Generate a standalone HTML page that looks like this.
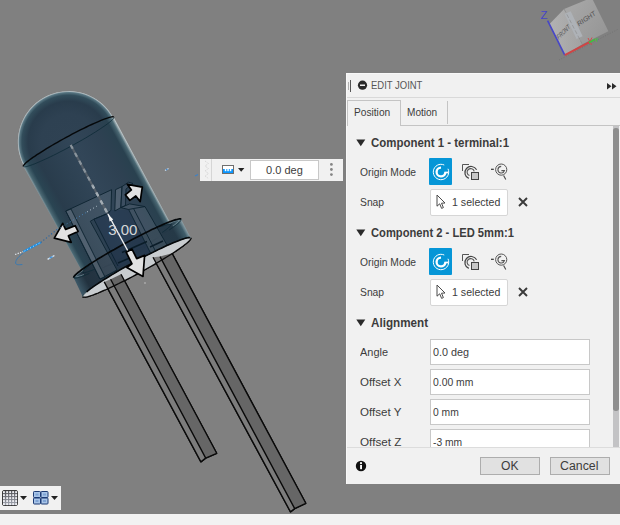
<!DOCTYPE html>
<html><head><meta charset="utf-8"><title>Edit Joint</title>
<style>
html,body{margin:0;padding:0;}
body{width:620px;height:525px;overflow:hidden;position:relative;background:#808080;font-family:"Liberation Sans",sans-serif;font-size:11px;color:#3c3c3c;}
.abs{position:absolute;}
#scene{position:absolute;left:0;top:0;}
#strip{position:absolute;left:0;top:514px;width:620px;height:11px;background:#f2f2f2;}
#tb{position:absolute;left:0;top:486px;width:61px;height:24px;background:#f1f1f1;}
#flt{position:absolute;left:200px;top:159px;width:143px;height:22px;background:#f1f1f1;}
#panel{position:absolute;left:346px;top:73px;width:274px;height:411px;background:#f1f1f1;box-sizing:border-box;}
.t{position:absolute;white-space:nowrap;line-height:14px;transform-origin:0 50%;}
.b{font-weight:bold;font-size:12px;}
.inp{position:absolute;background:#fff;border:1px solid #c8c8c8;box-sizing:border-box;}
.btn{position:absolute;background:#e1e1e1;border:1px solid #adadad;box-sizing:border-box;}
</style></head><body>
<svg id="scene" width="620" height="525" viewBox="0 0 620 525">
<defs>
<linearGradient id="gb" gradientUnits="userSpaceOnUse" x1="43.4" y1="204.4" x2="133.8" y2="155.2">
<stop offset="0" stop-color="#9fb0b6"/><stop offset="0.025" stop-color="#4a6873"/><stop offset="0.07" stop-color="#2a4553"/><stop offset="0.16" stop-color="#293c4c"/><stop offset="0.34" stop-color="#2d4152"/><stop offset="0.55" stop-color="#324658"/><stop offset="0.8" stop-color="#2e4152"/><stop offset="0.93" stop-color="#29414f"/><stop offset="0.975" stop-color="#4b6974"/><stop offset="1" stop-color="#b9c4c7"/></linearGradient>
<radialGradient id="gd" gradientUnits="userSpaceOnUse" cx="68.6" cy="141.8" r="50.7">
<stop offset="0" stop-color="#2f4253"/><stop offset="0.55" stop-color="#2e4152"/><stop offset="0.8" stop-color="#293c4c"/><stop offset="0.92" stop-color="#324d5b"/><stop offset="0.972" stop-color="#597783"/><stop offset="1" stop-color="#c9d2d5"/></radialGradient>
<linearGradient id="gf" gradientUnits="userSpaceOnUse" x1="73.7" y1="277.7" x2="181.1" y2="219.3">
<stop offset="0" stop-color="#3c5766"/><stop offset="0.08" stop-color="#22323f"/><stop offset="0.5" stop-color="#2a3c4c"/><stop offset="0.9" stop-color="#253947"/><stop offset="0.97" stop-color="#3f5d6a"/><stop offset="1" stop-color="#8fa3aa"/></linearGradient>
</defs>
<path d="M73.7,277.7 L73.7,277.3 L73.8,276.8 L74.2,276.2 L74.9,275.4 L75.7,274.6 L76.8,273.6 L78.1,272.5 L79.6,271.3 L81.3,270.0 L83.2,268.7 L85.3,267.2 L87.6,265.7 L90.0,264.0 L92.6,262.4 L95.4,260.6 L98.2,258.8 L101.3,257.0 L104.4,255.1 L107.6,253.2 L110.9,251.3 L114.3,249.4 L117.7,247.4 L121.2,245.5 L124.7,243.6 L128.2,241.7 L131.8,239.8 L135.2,238.0 L138.7,236.2 L142.1,234.5 L145.5,232.8 L148.7,231.2 L151.9,229.6 L155.0,228.2 L158.0,226.8 L160.8,225.6 L163.5,224.4 L166.0,223.3 L168.4,222.3 L170.5,221.5 L172.5,220.8 L174.4,220.1 L176.0,219.6 L177.4,219.3 L178.6,219.0 L179.5,218.9 L180.3,218.9 L180.8,219.1 L181.1,219.3 L190.8,238.0 L190.5,237.7 L190.0,237.6 L189.2,237.6 L188.2,237.7 L187.0,237.9 L185.6,238.2 L184.0,238.7 L182.2,239.3 L180.1,240.0 L177.9,240.9 L175.5,241.8 L173.0,242.9 L170.3,244.1 L167.4,245.3 L164.4,246.7 L161.3,248.1 L158.1,249.7 L154.8,251.3 L151.5,253.0 L148.0,254.7 L144.5,256.5 L141.0,258.3 L137.5,260.2 L133.9,262.1 L130.4,264.1 L126.9,266.0 L123.4,268.0 L120.0,269.9 L116.7,271.9 L113.5,273.8 L110.3,275.7 L107.3,277.5 L104.4,279.3 L101.6,281.1 L99.0,282.8 L96.6,284.4 L94.3,286.0 L92.2,287.5 L90.3,288.9 L88.6,290.2 L87.1,291.4 L85.8,292.5 L84.7,293.5 L83.9,294.4 L83.3,295.2 L82.9,295.8 L82.7,296.4 L82.8,296.8 Z" fill="url(#gf)"/>
<path d="M190.8,238.0 L190.9,238.4 L190.7,239.0 L190.3,239.6 L189.7,240.4 L188.9,241.3 L187.8,242.3 L186.5,243.4 L185.0,244.6 L183.3,245.9 L181.4,247.3 L179.3,248.8 L177.0,250.4 L174.6,252.0 L172.0,253.7 L169.2,255.5 L166.3,257.3 L163.3,259.1 L160.1,261.0 L156.9,262.9 L153.6,264.9 L150.2,266.8 L146.7,268.8 L143.2,270.7 L139.7,272.7 L136.1,274.6 L132.6,276.5 L129.1,278.3 L125.6,280.1 L122.1,281.8 L118.8,283.5 L115.5,285.1 L112.3,286.7 L109.2,288.1 L106.2,289.5 L103.3,290.7 L100.6,291.9 L98.1,293.0 L95.7,293.9 L93.5,294.8 L91.4,295.5 L89.6,296.1 L88.0,296.6 L86.6,296.9 L85.4,297.1 L84.4,297.2 L83.6,297.2 L83.1,297.1 L82.8,296.8 L82.7,296.4 L82.9,295.8 L83.3,295.2 L83.9,294.4 L84.7,293.5 L85.8,292.5 L87.1,291.4 L88.6,290.2 L90.3,288.9 L92.2,287.5 L94.3,286.0 L96.6,284.4 L99.0,282.8 L101.6,281.1 L104.4,279.3 L107.3,277.5 L110.3,275.7 L113.5,273.8 L116.7,271.9 L120.0,269.9 L123.4,268.0 L126.9,266.0 L130.4,264.1 L133.9,262.1 L137.5,260.2 L141.0,258.3 L144.5,256.5 L148.0,254.7 L151.5,253.0 L154.8,251.3 L158.1,249.7 L161.3,248.1 L164.4,246.7 L167.4,245.3 L170.3,244.1 L173.0,242.9 L175.5,241.8 L177.9,240.9 L180.1,240.0 L182.2,239.3 L184.0,238.7 L185.6,238.2 L187.0,237.9 L188.2,237.7 L189.2,237.6 L190.0,237.6 L190.5,237.7 L190.8,238.0 Z" fill="#c9cdd0"/>
<polygon points="104.2,281.9 110.6,279.2 205.7,458.1 200.9,461.9" fill="#7c7c7c"/>
<polygon points="110.6,279.2 121.0,274.2 216.7,453.3 205.7,458.1" fill="#666666"/>
<path d="M104.2,281.9 L200.9,461.9 L205.7,458.1 L216.7,453.3 L121.0,274.2 M110.6,279.2 L205.7,458.1" fill="none" stroke="#0a0a0a" stroke-width="1.35" stroke-linejoin="round"/>
<polygon points="153.0,257.2 160.0,256.6 294.7,508.6 290.5,511.9" fill="#7c7c7c"/>
<polygon points="160.0,256.6 172.0,253.2 305.8,503.3 294.7,508.6" fill="#666666"/>
<path d="M153.0,257.2 L290.5,511.9 L294.7,508.6 L305.8,503.3 L172.0,253.2 M160.0,256.6 L294.7,508.6" fill="none" stroke="#0a0a0a" stroke-width="1.35" stroke-linejoin="round"/>
<path d="M190.8,238.0 L190.9,238.4 L190.7,239.0 L190.3,239.6 L189.7,240.4 L188.9,241.3 L187.8,242.3 L186.5,243.4 L185.0,244.6 L183.3,245.9 L181.4,247.3 L179.3,248.8 L177.0,250.4 L174.6,252.0 L172.0,253.7 L169.2,255.5 L166.3,257.3 L163.3,259.1 L160.1,261.0 L156.9,262.9 L153.6,264.9 L150.2,266.8 L146.7,268.8 L143.2,270.7 L139.7,272.7 L136.1,274.6 L132.6,276.5 L129.1,278.3 L125.6,280.1 L122.1,281.8 L118.8,283.5 L115.5,285.1 L112.3,286.7 L109.2,288.1 L106.2,289.5 L103.3,290.7 L100.6,291.9 L98.1,293.0 L95.7,293.9 L93.5,294.8 L91.4,295.5 L89.6,296.1 L88.0,296.6 L86.6,296.9 L85.4,297.1 L84.4,297.2 L83.6,297.2 L83.1,297.1 L82.8,296.8" fill="none" stroke="#0a0a0a" stroke-width="1.2"/>
<path d="M23.4,166.4 L23.3,166.0 L23.5,165.6 L23.8,165.1 L24.3,164.4 L25.0,163.7 L25.9,162.8 L27.0,161.9 L28.3,160.9 L29.7,159.8 L31.3,158.6 L33.0,157.4 L35.0,156.1 L37.0,154.7 L39.2,153.3 L41.5,151.8 L43.9,150.3 L46.5,148.7 L49.1,147.1 L51.8,145.5 L54.6,143.9 L57.4,142.3 L60.3,140.7 L63.3,139.0 L66.2,137.4 L69.2,135.8 L72.1,134.2 L75.1,132.7 L78.0,131.2 L80.9,129.7 L83.7,128.3 L86.4,127.0 L89.1,125.7 L91.7,124.5 L94.2,123.4 L96.6,122.3 L98.9,121.3 L101.0,120.4 L103.0,119.6 L104.9,118.9 L106.5,118.3 L108.1,117.8 L109.4,117.4 L110.6,117.1 L111.6,116.9 L112.5,116.8 L113.1,116.9 L113.5,117.0 L113.8,117.2 L171.2,224.7 L170.8,224.1 L170.3,224.0 L169.7,224.0 L168.9,224.1 L167.9,224.3 L166.8,224.6 L165.5,225.0 L164.0,225.5 L162.3,226.1 L160.5,226.8 L158.6,227.6 L156.5,228.5 L154.3,229.5 L152.0,230.5 L149.5,231.6 L147.0,232.8 L144.4,234.1 L141.7,235.4 L138.9,236.8 L136.1,238.2 L133.3,239.7 L130.4,241.2 L127.5,242.7 L124.6,244.3 L121.7,245.9 L118.8,247.5 L116.0,249.1 L113.2,250.7 L110.5,252.2 L107.9,253.8 L105.3,255.3 L102.8,256.9 L100.4,258.3 L98.1,259.8 L96.0,261.2 L94.0,262.5 L92.1,263.7 L90.4,265.0 L88.8,266.1 L87.4,267.1 L86.2,268.1 L85.1,269.0 L84.2,269.8 L83.5,270.5 L83.0,271.1 L82.7,271.6 L82.6,272.1 L82.6,272.4 Z" fill="url(#gb)"/>
<path d="M23.4,166.4 L23.6,165.2 L22.2,162.3 L21.0,159.2 L20.0,156.1 L19.1,152.9 L18.5,149.7 L18.1,146.5 L17.9,143.2 L17.9,139.9 L18.2,136.6 L18.6,133.4 L19.3,130.2 L20.1,127.0 L21.2,123.9 L22.4,120.9 L23.9,117.9 L25.5,115.1 L27.3,112.4 L29.3,109.7 L31.5,107.3 L33.8,104.9 L36.2,102.8 L38.8,100.8 L41.5,98.9 L44.4,97.3 L47.3,95.8 L50.3,94.5 L53.4,93.4 L56.6,92.5 L59.8,91.9 L63.0,91.4 L66.3,91.2 L69.6,91.1 L72.9,91.3 L76.1,91.7 L79.4,92.3 L82.5,93.1 L85.7,94.1 L88.7,95.3 L91.7,96.7 L94.6,98.2 L97.3,100.0 L100.0,102.0 L102.5,104.1 L104.8,106.3 L107.1,108.8 L109.1,111.3 L111.0,114.0 L112.7,116.8 L113.8,117.2 L113.5,117.0 L113.1,116.9 L112.5,116.8 L111.6,116.9 L110.6,117.1 L109.4,117.4 L108.1,117.8 L106.5,118.3 L104.9,118.9 L103.0,119.6 L101.0,120.4 L98.9,121.3 L96.6,122.3 L94.2,123.4 L91.7,124.5 L89.1,125.7 L86.4,127.0 L83.7,128.3 L80.9,129.7 L78.0,131.2 L75.1,132.7 L72.1,134.2 L69.2,135.8 L66.2,137.4 L63.3,139.0 L60.3,140.7 L57.4,142.3 L54.6,143.9 L51.8,145.5 L49.1,147.1 L46.5,148.7 L43.9,150.3 L41.5,151.8 L39.2,153.3 L37.0,154.7 L35.0,156.1 L33.0,157.4 L31.3,158.6 L29.7,159.8 L28.3,160.9 L27.0,161.9 L25.9,162.8 L25.0,163.7 L24.3,164.4 L23.8,165.1 L23.5,165.6 L23.3,166.0 L23.4,166.4 Z" fill="url(#gd)"/>
<path d="M113.8,117.2 L113.9,117.6 L113.7,118.0 L113.4,118.5 L112.9,119.2 L112.2,119.9 L111.3,120.8 L110.2,121.7 L108.9,122.7 L107.5,123.8 L105.9,125.0 L104.2,126.2 L102.2,127.5 L100.2,128.9 L98.0,130.3 L95.7,131.8 L93.3,133.3 L90.7,134.9 L88.1,136.5 L85.4,138.1 L82.6,139.7 L79.8,141.3 L76.9,142.9 L73.9,144.6 L71.0,146.2 L68.0,147.8 L65.1,149.4 L62.1,150.9 L59.2,152.4 L56.3,153.9 L53.5,155.3 L50.8,156.6 L48.1,157.9 L45.5,159.1 L43.0,160.2 L40.6,161.3 L38.3,162.3 L36.2,163.2 L34.2,164.0 L32.3,164.7 L30.7,165.3 L29.1,165.8 L27.8,166.2 L26.6,166.5 L25.6,166.7 L24.7,166.8 L24.1,166.7 L23.7,166.6 L23.4,166.4" fill="none" stroke="#0d2a36" stroke-width="0.8"/>
<path d="M23.4,166.4 L23.3,166.0 L23.5,165.6 L23.8,165.1 L24.3,164.4 L25.0,163.7 L25.9,162.8 L27.0,161.9 L28.3,160.9 L29.7,159.8 L31.3,158.6 L33.0,157.4 L35.0,156.1 L37.0,154.7 L39.2,153.3 L41.5,151.8 L43.9,150.3 L46.5,148.7 L49.1,147.1 L51.8,145.5 L54.6,143.9 L57.4,142.3 L60.3,140.7 L63.3,139.0 L66.2,137.4 L69.2,135.8 L72.1,134.2 L75.1,132.7 L78.0,131.2 L80.9,129.7 L83.7,128.3 L86.4,127.0 L89.1,125.7 L91.7,124.5 L94.2,123.4 L96.6,122.3 L98.9,121.3 L101.0,120.4 L103.0,119.6 L104.9,118.9 L106.5,118.3 L108.1,117.8 L109.4,117.4 L110.6,117.1 L111.6,116.9 L112.5,116.8 L113.1,116.9 L113.5,117.0 L113.8,117.2" fill="none" stroke="#05080a" stroke-width="1.4"/>
<polygon points="93.9,219.2 109.0,212.6 111.0,210.3 128.7,209.5 152.0,255.0 117.0,268.0" fill="rgba(34,54,80,0.5)" stroke="none" stroke-width="0.9" stroke-linejoin="round" />
<polygon points="65.8,211.0 111.6,189.7 111.0,210.3 107.7,213.5 93.9,219.2 90.3,221.3 117.0,270.0 100.0,279.0" fill="rgba(150,158,172,0.17)" stroke="#0c2230" stroke-width="0.9" stroke-linejoin="round" />
<polygon points="65.8,211.0 71.0,209.0 105.0,277.0 100.0,279.0" fill="rgba(170,178,190,0.20)" stroke="#0c2230" stroke-width="0.9" stroke-linejoin="round" />
<path d="M93.9,219.2 L118.0,266.0" fill="none" stroke="#0c2230" stroke-width="0.9" />
<path d="M93.9,219.2 L108.4,213.2 L109.5,211.0" fill="none" stroke="#0c2230" stroke-width="0.9" />
<polygon points="115.5,189.7 122.0,186.6 120.8,207.6 114.8,211.0" fill="rgba(150,158,172,0.30)" stroke="#0c2230" stroke-width="0.9" stroke-linejoin="round" />
<polygon points="122.0,186.6 128.5,182.2 133.0,183.5 126.0,189.0 125.5,205.5 120.8,207.6" fill="rgba(90,105,125,0.30)" stroke="#0c2230" stroke-width="0.9" stroke-linejoin="round" />
<polygon points="120.8,207.6 129.7,203.9 145.0,206.6 171.0,252.0 153.0,258.0 128.7,209.5" fill="rgba(150,158,172,0.17)" stroke="#0c2230" stroke-width="0.9" stroke-linejoin="round" />
<path d="M133.5,208.5 L158.0,256.0" fill="none" stroke="#0c2230" stroke-width="0.9" />
<path d="M128.7,209.5 L133.5,208.5 L145.0,206.6" fill="none" stroke="#0c2230" stroke-width="0.9" />
<path d="M122.0,252.5 L147.0,241.5" fill="none" stroke="#0a1c28" stroke-width="1.6" />
<path d="M118.0,263.0 L132.0,257.0" fill="none" stroke="#0a1c28" stroke-width="1.6" />
<path d="M150.0,247.0 L163.0,241.0" fill="none" stroke="#0a1c28" stroke-width="1.4" />
<path d="M181.1,219.3 L181.1,219.7 L181.0,220.2 L180.6,220.8 L179.9,221.6 L179.1,222.4 L178.0,223.4 L176.7,224.5 L175.2,225.7 L173.5,227.0 L171.6,228.3 L169.5,229.8 L167.2,231.3 L164.8,233.0 L162.2,234.6 L159.4,236.4 L156.6,238.2 L153.5,240.0 L150.4,241.9 L147.2,243.8 L143.9,245.7 L140.5,247.6 L137.1,249.6 L133.6,251.5 L130.1,253.4 L126.6,255.3 L123.0,257.2 L119.6,259.0 L116.1,260.8 L112.7,262.5 L109.3,264.2 L106.1,265.8 L102.9,267.4 L99.8,268.8 L96.8,270.2 L94.0,271.4 L91.3,272.6 L88.8,273.7 L86.4,274.7 L84.3,275.5 L82.3,276.2 L80.4,276.9 L78.8,277.4 L77.4,277.7 L76.2,278.0 L75.3,278.1 L74.5,278.1 L74.0,277.9 L73.7,277.7 L190.8,238.0 L190.5,237.7 L190.0,237.6 L189.2,237.6 L188.2,237.7 L187.0,237.9 L185.6,238.2 L184.0,238.7 L182.2,239.3 L180.1,240.0 L177.9,240.9 L175.5,241.8 L173.0,242.9 L170.3,244.1 L167.4,245.3 L164.4,246.7 L161.3,248.1 L158.1,249.7 L154.8,251.3 L151.5,253.0 L148.0,254.7 L144.5,256.5 L141.0,258.3 L137.5,260.2 L133.9,262.1 L130.4,264.1 L126.9,266.0 L123.4,268.0 L120.0,269.9 L116.7,271.9 L113.5,273.8 L110.3,275.7 L107.3,277.5 L104.4,279.3 L101.6,281.1 L99.0,282.8 L96.6,284.4 L94.3,286.0 L92.2,287.5 L90.3,288.9 L88.6,290.2 L87.1,291.4 L85.8,292.5 L84.7,293.5 L83.9,294.4 L83.3,295.2 L82.9,295.8 L82.7,296.4 L82.8,296.8 Z" fill="#22323f" opacity="0.12"/>
<path d="M83.8,274.5 L83.2,274.7 L82.6,275.0 L82.0,275.2 L81.5,275.4 L81.0,275.6 L80.5,275.7 L80.0,275.9 L79.6,276.0 L79.1,276.2 L78.8,276.3 L78.4,276.4 L78.0,276.5 L77.7,276.6 L77.4,276.6 L77.2,276.7 L76.9,276.7 L76.7,276.7 L76.5,276.7 L76.3,276.7 L76.2,276.7 L76.1,276.6 L76.0,276.6 L75.9,276.5 L75.9,276.4 L75.9,276.3 L75.9,276.2 L75.9,276.1 L76.0,276.0 L76.1,275.8 L76.2,275.6 L76.4,275.5 L76.5,275.3 L76.7,275.1 L77.0,274.8 L77.2,274.6 L77.5,274.3 L77.8,274.1 L78.1,273.8 L78.5,273.5 L78.9,273.2 L79.3,272.9 L79.7,272.6 L80.1,272.2 L80.6,271.9 L81.1,271.5 L81.6,271.2 L82.2,270.8 L82.7,270.4" fill="none" stroke="#6f8894" stroke-width="1.1" opacity="0.8"/>
<path d="M170.0,222.9 L170.7,222.6 L171.3,222.4 L171.9,222.2 L172.5,221.9 L173.0,221.7 L173.6,221.5 L174.1,221.4 L174.5,221.2 L175.0,221.0 L175.4,220.9 L175.8,220.8 L176.2,220.7 L176.6,220.6 L176.9,220.5 L177.2,220.4 L177.5,220.4 L177.8,220.3 L178.0,220.3 L178.2,220.3 L178.4,220.3 L178.5,220.3 L178.7,220.3 L178.8,220.4 L178.8,220.4 L178.9,220.5 L178.9,220.6 L178.9,220.7 L178.9,220.8 L178.8,221.0 L178.7,221.1 L178.6,221.3 L178.5,221.4 L178.4,221.6 L178.2,221.8 L178.0,222.0 L177.7,222.3 L177.5,222.5 L177.2,222.8 L176.9,223.0 L176.5,223.3 L176.2,223.6 L175.8,223.9 L175.4,224.2 L174.9,224.6 L174.5,224.9 L174.0,225.3 L173.5,225.6 L172.9,226.0" fill="none" stroke="#6f8894" stroke-width="1.1" opacity="0.8"/>
<path d="M73.7,277.7 L73.7,277.3 L73.8,276.8 L74.2,276.2 L74.9,275.4 L75.7,274.6 L76.8,273.6 L78.1,272.5 L79.6,271.3 L81.3,270.0 L83.2,268.7 L85.3,267.2 L87.6,265.7 L90.0,264.0 L92.6,262.4 L95.4,260.6 L98.2,258.8 L101.3,257.0 L104.4,255.1 L107.6,253.2 L110.9,251.3 L114.3,249.4 L117.7,247.4 L121.2,245.5 L124.7,243.6 L128.2,241.7 L131.8,239.8 L135.2,238.0 L138.7,236.2 L142.1,234.5 L145.5,232.8 L148.7,231.2 L151.9,229.6 L155.0,228.2 L158.0,226.8 L160.8,225.6 L163.5,224.4 L166.0,223.3 L168.4,222.3 L170.5,221.5 L172.5,220.8 L174.4,220.1 L176.0,219.6 L177.4,219.3 L178.6,219.0 L179.5,218.9 L180.3,218.9 L180.8,219.1 L181.1,219.3" fill="none" stroke="#05080a" stroke-width="1.7"/>
<path d="M181.1,219.3 L181.1,219.4 L181.1,219.5 L181.1,219.6 L181.1,219.7 L181.1,219.8 L181.1,219.9 L181.1,220.0 L181.0,220.1 L180.9,220.3 L180.9,220.4 L180.8,220.5 L180.7,220.7 L180.6,220.9 L180.4,221.0 L180.3,221.2 L180.1,221.4 L180.0,221.6 L179.8,221.7 L179.6,221.9 L179.4,222.1 L179.2,222.3 L179.0,222.6 L178.7,222.8 L178.5,223.0 L178.2,223.2 L177.9,223.5 L177.7,223.7 L177.4,224.0 L177.0,224.2 L176.7,224.5 L176.4,224.8 L176.0,225.0 L175.7,225.3 L175.3,225.6 L175.0,225.9 L174.6,226.2 L174.2,226.5 L173.8,226.8 L173.3,227.1 L172.9,227.4 L172.5,227.7 L172.0,228.1 L171.5,228.4 L171.1,228.7 L170.6,229.1 L170.1,229.4 L169.6,229.7 L169.1,230.1" fill="none" stroke="#0d2a36" stroke-width="0.9"/>
<path d="M89.3,273.5 L88.7,273.7 L88.2,274.0 L87.6,274.2 L87.1,274.4 L86.5,274.6 L86.0,274.8 L85.5,275.0 L85.0,275.2 L84.5,275.4 L84.0,275.6 L83.5,275.8 L83.0,276.0 L82.6,276.1 L82.1,276.3 L81.7,276.4 L81.3,276.6 L80.8,276.7 L80.4,276.9 L80.0,277.0 L79.7,277.1 L79.3,277.2 L78.9,277.3 L78.6,277.4 L78.2,277.5 L77.9,277.6 L77.6,277.7 L77.3,277.8 L77.0,277.8 L76.7,277.9 L76.5,277.9 L76.2,278.0 L76.0,278.0 L75.7,278.0 L75.5,278.1 L75.3,278.1 L75.1,278.1 L74.9,278.1 L74.8,278.1 L74.6,278.1 L74.4,278.1 L74.3,278.0 L74.2,278.0 L74.1,278.0 L74.0,277.9 L73.9,277.9 L73.8,277.8 L73.8,277.8 L73.7,277.7" fill="none" stroke="#0d2a36" stroke-width="0.9"/>
<path d="M94.4,269.4 L93.6,269.7 L92.8,270.0 L92.0,270.3 L91.3,270.6 L90.6,270.8 L89.9,271.1 L89.2,271.3 L88.6,271.5 L88.0,271.7 L87.5,271.9 L86.9,272.1 L86.4,272.2 L85.9,272.3 L85.5,272.5 L85.1,272.5 L84.7,272.6 L84.3,272.7 L84.0,272.7 L83.7,272.7 L83.5,272.7 L83.2,272.7 L83.0,272.7 L82.9,272.6 L82.7,272.5 L82.6,272.4 L82.6,272.3 L82.6,272.2 L82.6,272.1 L82.6,271.9 L82.7,271.7 L82.8,271.5 L82.9,271.3 L83.1,271.1 L83.3,270.8 L83.5,270.6 L83.8,270.3 L84.1,270.0 L84.4,269.7 L84.7,269.3 L85.1,269.0 L85.5,268.6 L86.0,268.3 L86.5,267.9 L87.0,267.5 L87.5,267.1 L88.1,266.6 L88.7,266.2 L89.3,265.7" fill="none" stroke="#0d2a36" stroke-width="0.8"/>
<path d="M161.7,226.3 L162.5,226.1 L163.2,225.8 L163.8,225.6 L164.5,225.3 L165.1,225.1 L165.7,224.9 L166.3,224.8 L166.8,224.6 L167.3,224.5 L167.8,224.3 L168.2,224.2 L168.6,224.1 L169.0,224.1 L169.3,224.0 L169.7,224.0 L169.9,224.0 L170.2,224.0 L170.4,224.0 L170.6,224.0 L170.8,224.1 L170.9,224.2 L171.0,224.3 L171.0,224.4 L171.0,224.5 L171.0,224.7 L171.0,224.8 L170.9,225.0 L170.8,225.2 L170.7,225.4 L170.5,225.7 L170.3,225.9 L170.1,226.2 L169.8,226.5 L169.5,226.8 L169.2,227.1 L168.8,227.4 L168.4,227.8 L168.0,228.1 L167.5,228.5 L167.0,228.9 L166.5,229.3 L166.0,229.7 L165.4,230.2 L164.8,230.6 L164.1,231.1 L163.5,231.6 L162.8,232.0 L162.1,232.5" fill="none" stroke="#0d2a36" stroke-width="0.8"/>
<path d="M190.8,238.0 L190.9,238.4 L190.7,239.0 L190.3,239.6 L189.7,240.4 L188.9,241.3 L187.8,242.3 L186.5,243.4 L185.0,244.6 L183.3,245.9 L181.4,247.3 L179.3,248.8 L177.0,250.4 L174.6,252.0 L172.0,253.7 L169.2,255.5 L166.3,257.3 L163.3,259.1 L160.1,261.0 L156.9,262.9 L153.6,264.9 L150.2,266.8 L146.7,268.8 L143.2,270.7 L139.7,272.7 L136.1,274.6 L132.6,276.5 L129.1,278.3 L125.6,280.1 L122.1,281.8 L118.8,283.5 L115.5,285.1 L112.3,286.7 L109.2,288.1 L106.2,289.5 L103.3,290.7 L100.6,291.9 L98.1,293.0 L95.7,293.9 L93.5,294.8 L91.4,295.5 L89.6,296.1 L88.0,296.6 L86.6,296.9 L85.4,297.1 L84.4,297.2 L83.6,297.2 L83.1,297.1 L82.8,296.8 L82.7,296.4 L82.9,295.8 L83.3,295.2 L83.9,294.4 L84.7,293.5 L85.8,292.5 L87.1,291.4 L88.6,290.2 L90.3,288.9 L92.2,287.5 L94.3,286.0 L96.6,284.4 L99.0,282.8 L101.6,281.1 L104.4,279.3 L107.3,277.5 L110.3,275.7 L113.5,273.8 L116.7,271.9 L120.0,269.9 L123.4,268.0 L126.9,266.0 L130.4,264.1 L133.9,262.1 L137.5,260.2 L141.0,258.3 L144.5,256.5 L148.0,254.7 L151.5,253.0 L154.8,251.3 L158.1,249.7 L161.3,248.1 L164.4,246.7 L167.4,245.3 L170.3,244.1 L173.0,242.9 L175.5,241.8 L177.9,240.9 L180.1,240.0 L182.2,239.3 L184.0,238.7 L185.6,238.2 L187.0,237.9 L188.2,237.7 L189.2,237.6 L190.0,237.6 L190.5,237.7 L190.8,238.0 Z" fill="#c9cdd0"/>
<polygon points="104.2,281.9 110.6,279.2 205.7,458.1 200.9,461.9" fill="#7c7c7c"/>
<polygon points="110.6,279.2 121.0,274.2 216.7,453.3 205.7,458.1" fill="#666666"/>
<path d="M104.2,281.9 L200.9,461.9 L205.7,458.1 L216.7,453.3 L121.0,274.2 M110.6,279.2 L205.7,458.1" fill="none" stroke="#0a0a0a" stroke-width="1.35" stroke-linejoin="round"/>
<polygon points="153.0,257.2 160.0,256.6 294.7,508.6 290.5,511.9" fill="#7c7c7c"/>
<polygon points="160.0,256.6 172.0,253.2 305.8,503.3 294.7,508.6" fill="#666666"/>
<path d="M153.0,257.2 L290.5,511.9 L294.7,508.6 L305.8,503.3 L172.0,253.2 M160.0,256.6 L294.7,508.6" fill="none" stroke="#0a0a0a" stroke-width="1.35" stroke-linejoin="round"/>
<path d="M190.8,238.0 L190.5,237.7 L190.0,237.6 L189.2,237.6 L188.2,237.7 L187.0,237.9 L185.6,238.2 L184.0,238.7 L182.2,239.3 L180.1,240.0 L177.9,240.9 L175.5,241.8 L173.0,242.9 L170.3,244.1 L167.4,245.3 L164.4,246.7 L161.3,248.1 L158.1,249.7 L154.8,251.3 L151.5,253.0 L148.0,254.7 L144.5,256.5 L141.0,258.3 L137.5,260.2 L133.9,262.1 L130.4,264.1 L126.9,266.0 L123.4,268.0 L120.0,269.9 L116.7,271.9 L113.5,273.8 L110.3,275.7 L107.3,277.5 L104.4,279.3 L101.6,281.1 L99.0,282.8 L96.6,284.4 L94.3,286.0 L92.2,287.5 L90.3,288.9 L88.6,290.2 L87.1,291.4 L85.8,292.5 L84.7,293.5 L83.9,294.4 L83.3,295.2 L82.9,295.8 L82.7,296.4 L82.8,296.8" fill="none" stroke="#0d2a36" stroke-width="0.9"/>
<path d="M86.6,291.8 L87.8,290.8 L89.1,289.8 L90.5,288.7 L92.1,287.6 L93.7,286.4 L95.6,285.1 L97.5,283.8 L99.5,282.5 L101.7,281.1 L103.9,279.6 L106.3,278.2 L108.7,276.7 L111.2,275.1 L113.8,273.6 L116.4,272.0 L119.2,270.4 L121.9,268.8 L124.7,267.2 L127.5,265.7 L130.4,264.1 L133.3,262.5 L136.2,260.9 L139.1,259.4 L142.0,257.8 L144.8,256.3 L147.7,254.9 L150.5,253.5 L153.3,252.1 L156.0,250.7 L158.7,249.4 L161.3,248.2 L163.8,247.0 L166.3,245.8 L168.7,244.8 L171.0,243.8 L173.2,242.8 L175.2,242.0 L177.2,241.2 L179.1,240.4 L180.8,239.8 L182.4,239.2 L183.9,238.7 L185.3,238.3 L186.5,238.0 L187.6,237.8 L188.5,237.6 L189.3,237.6 L189.9,237.6" fill="none" stroke="#05080a" stroke-width="1.6"/>
<path d="M190.8,238.0 L190.9,238.4 L190.7,239.0 L190.3,239.6 L189.7,240.4 L188.9,241.3 L187.8,242.3 L186.5,243.4 L185.0,244.6 L183.3,245.9 L181.4,247.3 L179.3,248.8 L177.0,250.4 L174.6,252.0 L172.0,253.7 L169.2,255.5 L166.3,257.3 L163.3,259.1 L160.1,261.0 L156.9,262.9 L153.6,264.9 L150.2,266.8 L146.7,268.8 L143.2,270.7 L139.7,272.7 L136.1,274.6 L132.6,276.5 L129.1,278.3 L125.6,280.1 L122.1,281.8 L118.8,283.5 L115.5,285.1 L112.3,286.7 L109.2,288.1 L106.2,289.5 L103.3,290.7 L100.6,291.9 L98.1,293.0 L95.7,293.9 L93.5,294.8 L91.4,295.5 L89.6,296.1 L88.0,296.6 L86.6,296.9 L85.4,297.1 L84.4,297.2 L83.6,297.2 L83.1,297.1 L82.8,296.8" fill="none" stroke="#0a0a0a" stroke-width="1.3"/>
<path d="M70.7,145.0 L107.9,214.0" fill="none" stroke="#56606a" stroke-width="2.0" />
<path d="M70.7,145.0 L107.9,214.0" fill="none" stroke="#8a949c" stroke-width="2.2" stroke-dasharray="4.3 4.7"/>
<path d="M92.5,185.5 L107.9,214.0" fill="none" stroke="#a4adb4" stroke-width="2.2" stroke-dasharray="4.3 4.7" stroke-dashoffset="1.0"/>
<path d="M107.9,214.0 L128.5,252.0" fill="none" stroke="#f2f2f2" stroke-width="1.4" />
<polygon points="108.2,214.2 113.2,219.6 109.6,221.4" fill="#f2f2f2" stroke="none" stroke-width="0.9" stroke-linejoin="round" />
<text x="108.2" y="234.8" font-family="Liberation Sans, sans-serif" font-size="15" fill="#d4d6d8">3.00</text>
<polygon points="127.3,184.3 142.3,187.1 140.2,201.6 135.8,196.0 129.8,200.4 125.3,194.8 131.4,189.9" fill="#e2e2e2" stroke="#000" stroke-width="1.7" stroke-linejoin="round" />
<polygon points="54.3,238.2 62.7,223.3 65.6,229.4 75.2,225.7 78.1,231.4 68.4,235.8 71.2,242.3" fill="#e2e2e2" stroke="#000" stroke-width="1.7" stroke-linejoin="round" />
<polygon points="126.2,252.3 132.0,249.1 136.7,258.6 144.6,255.4 143.0,276.4 126.8,267.5 132.0,263.8" fill="#e2e2e2" stroke="#000" stroke-width="1.7" stroke-linejoin="round" />
<circle cx="145" cy="283" r="1" fill="#a8a8a8"/>
<path d="M23.4,253 C19,256 15.6,259.5 15.6,263 C15.8,264.8 18.5,265 22.4,264.5" fill="none" stroke="#2a78bc" stroke-width="0.9" opacity="0.9"/>
<path d="M15.2,254.5 L23.4,251.6" fill="none" stroke="#e6eef6" stroke-width="1.3" stroke-dasharray="1.2 1.4"/>
<path d="M23.4,251.6 L40.8,242.4" fill="none" stroke="#1b8fe6" stroke-width="2.2" />
<path d="M24.5,251.0 L40.0,242.8" fill="none" stroke="#eaf4ff" stroke-width="0.9" stroke-dasharray="0.9 2.3"/>
<path d="M40.8,242.4 L57.3,229.4" fill="none" stroke="#1f62a6" stroke-width="1.1" stroke-dasharray="1.1 2.2"/>
<path d="M57.3,229.4 L87.0,212.0" fill="none" stroke="#4d8fcc" stroke-width="0.8" stroke-dasharray="1 2.6"/>
<path d="M87.0,212.0 L97.0,206.0" fill="none" stroke="#d8e4ee" stroke-width="0.8" stroke-dasharray="1 2.6"/>
<path d="M47.6,259.4 L54.4,255.5" fill="none" stroke="#dce9f5" stroke-width="1.3" />
<path d="M49.5,258.3 L52.5,256.6" fill="none" stroke="#3a90dc" stroke-width="1.3" />
<path d="M165.0,170.5 L168.5,168.5" fill="none" stroke="#d0e0ee" stroke-width="1.2" />
<path d="M166.0,170.0 L167.5,169.1" fill="none" stroke="#3a80c8" stroke-width="1.2" />
<path d="M195.0,176.0 L198.0,174.5" fill="none" stroke="#3a80c8" stroke-width="1.2" />
<defs><linearGradient id="cf" gradientUnits="userSpaceOnUse" x1="550" y1="30" x2="582" y2="30"><stop offset="0" stop-color="#b2b2b2"/><stop offset="1" stop-color="#a2a2a2"/></linearGradient>
<linearGradient id="cr" gradientUnits="userSpaceOnUse" x1="570" y1="10" x2="606" y2="34"><stop offset="0" stop-color="#a6a6a6"/><stop offset="1" stop-color="#969696"/></linearGradient></defs>
<path d="M559 60 L618.5 29" stroke="#6e6e6e" stroke-width="0.8" stroke-dasharray="1 1.6" fill="none"/>
<polygon points="549.6,24 564.1,9 582.3,44.3 564.8,55.2" fill="url(#cf)"/>
<polygon points="564.1,9 588.5,-1 592.4,-1 608.4,31.2 582.3,44.3" fill="url(#cr)"/>
<path d="M567.6 12.6 L579.6 37.6" stroke="#aeb2b7" stroke-width="6.8" stroke-linecap="butt" fill="none"/>
<path d="M564.1 9 L582.3 44.3" stroke="#8a8a8a" stroke-width="0.6" stroke-dasharray="4 2" fill="none"/>
<text transform="matrix(0.45,-0.46,0.40,0.80,558.6,40.0)" font-family="Liberation Sans, sans-serif" font-size="7.6" fill="#4a4a4a" opacity="0.9">FRONT</text>
<text transform="matrix(0.74,-0.50,0.40,0.80,578.8,26.4)" font-family="Liberation Sans, sans-serif" font-size="7.6" fill="#4a4a4a" opacity="0.9">RIGHT</text>
<path d="M547.6 20.6 L564.8 55.2" stroke="#4646c8" stroke-width="1.6" fill="none"/>
<path d="M564.8 55.2 L589.5 42.1" stroke="#cf4444" stroke-width="2" fill="none"/>
<path d="M588 38 L591.5 45 M592 37.5 L588.5 44" stroke="#d24a4a" stroke-width="1" fill="none"/>
<path d="M589 42.5 L595 39.5" stroke="#3fc03f" stroke-width="1.8" fill="none"/>
<text x="595" y="42" font-family="Liberation Sans, sans-serif" font-size="5" fill="#3fc03f" font-weight="bold">Y</text>
<text x="540.6" y="19" font-family="Liberation Sans, sans-serif" font-size="11.5" fill="#4646c8">Z</text>
</svg>
<div id="strip"></div>
<div id="tb"><svg class="abs" style="left:2px;top:4px" width="16" height="16" viewBox="0 0 16 16"><defs><linearGradient id="gg" x1="0" y1="0" x2="0" y2="1"><stop offset="0" stop-color="#4a4a4e"/><stop offset="1" stop-color="#a4a8b4"/></linearGradient><linearGradient id="gc" x1="0" y1="0" x2="0" y2="1"><stop offset="0" stop-color="#ffffff"/><stop offset="0.5" stop-color="#f4f4f8"/><stop offset="1" stop-color="#dfe2ea"/></linearGradient></defs><rect x="0.5" y="0.5" width="15" height="15" rx="1.5" fill="url(#gg)" stroke="#3c3c3c"/><rect x="1.0" y="1.2" width="1.9" height="1.9" fill="url(#gc)"/><rect x="1.0" y="4.2" width="1.9" height="1.9" fill="url(#gc)"/><rect x="1.0" y="7.2" width="1.9" height="1.9" fill="url(#gc)"/><rect x="1.0" y="10.2" width="1.9" height="1.9" fill="url(#gc)"/><rect x="1.0" y="13.2" width="1.9" height="1.9" fill="url(#gc)"/><rect x="4.2" y="1.2" width="1.9" height="1.9" fill="url(#gc)"/><rect x="4.2" y="4.2" width="1.9" height="1.9" fill="url(#gc)"/><rect x="4.2" y="7.2" width="1.9" height="1.9" fill="url(#gc)"/><rect x="4.2" y="10.2" width="1.9" height="1.9" fill="url(#gc)"/><rect x="4.2" y="13.2" width="1.9" height="1.9" fill="url(#gc)"/><rect x="7.2" y="1.2" width="1.9" height="1.9" fill="url(#gc)"/><rect x="7.2" y="4.2" width="1.9" height="1.9" fill="url(#gc)"/><rect x="7.2" y="7.2" width="1.9" height="1.9" fill="url(#gc)"/><rect x="7.2" y="10.2" width="1.9" height="1.9" fill="url(#gc)"/><rect x="7.2" y="13.2" width="1.9" height="1.9" fill="url(#gc)"/><rect x="10.2" y="1.2" width="1.9" height="1.9" fill="url(#gc)"/><rect x="10.2" y="4.2" width="1.9" height="1.9" fill="url(#gc)"/><rect x="10.2" y="7.2" width="1.9" height="1.9" fill="url(#gc)"/><rect x="10.2" y="10.2" width="1.9" height="1.9" fill="url(#gc)"/><rect x="10.2" y="13.2" width="1.9" height="1.9" fill="url(#gc)"/><rect x="13.2" y="1.2" width="1.9" height="1.9" fill="url(#gc)"/><rect x="13.2" y="4.2" width="1.9" height="1.9" fill="url(#gc)"/><rect x="13.2" y="7.2" width="1.9" height="1.9" fill="url(#gc)"/><rect x="13.2" y="10.2" width="1.9" height="1.9" fill="url(#gc)"/><rect x="13.2" y="13.2" width="1.9" height="1.9" fill="url(#gc)"/></svg><svg class="abs" style="left:20px;top:10px" width="7" height="4" viewBox="0 0 7 4"><path d="M0 0 H7 L3.5 4 Z" fill="#222"/></svg><svg class="abs" style="left:33px;top:5px" width="16" height="14" viewBox="0 0 16 14"><rect x="0.5" y="0.5" width="7" height="6" rx="0.8" fill="#a9c5e8" stroke="#1d3b74"/><rect x="2.5" y="2.5" width="3" height="2" fill="#7fa3d4"/><rect x="8.0" y="0.5" width="7" height="6" rx="0.8" fill="#a9c5e8" stroke="#1d3b74"/><rect x="10.0" y="2.5" width="3" height="2" fill="#7fa3d4"/><rect x="0.5" y="7.0" width="7" height="6" rx="0.8" fill="#a9c5e8" stroke="#1d3b74"/><rect x="2.5" y="9.0" width="3" height="2" fill="#7fa3d4"/><rect x="8.0" y="7.0" width="7" height="6" rx="0.8" fill="#a9c5e8" stroke="#1d3b74"/><rect x="10.0" y="9.0" width="3" height="2" fill="#7fa3d4"/></svg><svg class="abs" style="left:51px;top:10px" width="7" height="4" viewBox="0 0 7 4"><path d="M0 0 H7 L3.5 4 Z" fill="#222"/></svg></div>
<div id="flt"><svg class="abs" style="left:4px;top:1px" width="6" height="20" viewBox="0 0 6 20"><path d="M1 1 L4.5 3.5 L1 6 L4.5 8.5 L1 11 L4.5 13.5 L1 16 L4.5 18.5" fill="none" stroke="#d2d2d2" stroke-width="0.9" stroke-dasharray="1.2 0.8"/></svg><div class="abs" style="left:10.5px;top:0;width:1.5px;height:22px;background:#d6d6d6"></div><svg class="abs" style="left:22px;top:6px" width="12" height="9" viewBox="0 0 12 9"><rect x="0.5" y="0.5" width="11" height="8" fill="#fff" stroke="#6e6e6e"/><rect x="1" y="4" width="10" height="4" fill="#0a96ff"/><rect x="2.8" y="4" width="1.5" height="2.2" fill="#fff"/><rect x="5.3" y="4" width="1.5" height="2.2" fill="#fff"/><rect x="7.8" y="4" width="1.5" height="2.2" fill="#fff"/></svg><svg class="abs" style="left:38px;top:9px" width="7" height="4" viewBox="0 0 7 4"><path d="M0 0 H6.4 L3.2 3.8 Z" fill="#222"/></svg><div class="inp" style="left:50px;top:1px;width:69px;height:20px"></div><svg class="abs" style="left:129px;top:3px" width="5" height="16" viewBox="0 0 5 16"><circle cx="2.4" cy="2.4" r="1.4" fill="#858585"/><circle cx="2.4" cy="7.5" r="1.4" fill="#858585"/><circle cx="2.4" cy="12.6" r="1.4" fill="#858585"/></svg></div>
<div id="panel"></div><div class="abs" style="left:346px;top:73px;width:274px;height:1px;background:#f8f8f8"></div><div class="abs" style="left:346px;top:73px;width:1px;height:411px;background:#f8f8f8"></div>
<div class="abs" style="left:347px;top:97px;width:273px;height:1px;background:#d9d9d9"></div>
<div class="abs" style="left:348px;top:82px;width:1px;height:8px;background:#b0b0b0"></div>
<div class="abs" style="left:350px;top:80px;width:1px;height:12px;background:#555"></div>
<svg class="abs" style="left:357px;top:80px" width="11" height="11" viewBox="0 0 11 11"><circle cx="5.5" cy="5.2" r="4.6" fill="#2a2a2a"/><rect x="3" y="4.5" width="5" height="1.5" fill="#f0f0f0"/></svg>
<svg class="abs" style="left:606px;top:82px" width="12" height="9" viewBox="0 0 12 9"><path d="M1 1 L5.5 4.3 L1 7.6 Z M6 1 L10.5 4.3 L6 7.6 Z" fill="#2a2a2a"/></svg>
<div class="abs" style="left:347px;top:125px;width:273px;height:1px;background:#c4c4c4"></div>
<div class="abs" style="left:347px;top:100px;width:54px;height:26px;border:1px solid #c4c4c4;border-bottom:none;background:#f1f1f1;box-sizing:border-box"></div>
<div class="abs" style="left:447px;top:101px;width:1px;height:23px;background:#c4c4c4"></div>
<svg class="abs" style="left:356px;top:139px" width="10" height="8" viewBox="0 0 10 8"><path d="M0.3 0.5 L9.3 0.5 L4.8 7.3 Z" fill="#2a2a2a"/></svg>
<svg class="abs" style="left:356px;top:229px" width="10" height="8" viewBox="0 0 10 8"><path d="M0.3 0.5 L9.3 0.5 L4.8 7.3 Z" fill="#2a2a2a"/></svg>
<svg class="abs" style="left:356px;top:319px" width="10" height="8" viewBox="0 0 10 8"><path d="M0.3 0.5 L9.3 0.5 L4.8 7.3 Z" fill="#2a2a2a"/></svg>
<svg class="abs" style="left:429px;top:158px" width="23" height="27" viewBox="0 0 23 27"><rect width="23" height="27" rx="1" fill="#0696d7"/><path d="M18.98 10.75 A7.7 7.7 0 1 1 15.25 7.02" fill="none" stroke="#fff" stroke-width="1"/><path d="M12 9.6 A4.4 4.4 0 1 0 16.38 14.38" fill="none" stroke="#fff" stroke-width="2.3"/><path d="M15.4 14.5 H19.6" stroke="#fff" stroke-width="1.7"/></svg>
<svg class="abs" style="left:461px;top:163px" width="20" height="20" viewBox="0 0 20 20"><g fill="none" stroke="#555" stroke-width="1"><path d="M1.5 8 V1.5 H8"/><path d="M15.6 6.8 A6.2 6.2 0 1 0 7.8 15.4" stroke="#444" stroke-width="1.2"/><path d="M13.2 8.4 A3.6 3.6 0 1 0 8.5 12.6" stroke="#555" stroke-width="1.1"/><rect x="10.5" y="9.5" width="7" height="7" fill="#c8c8c8" stroke="#444"/></g></svg>
<svg class="abs" style="left:489px;top:163px" width="22" height="22" viewBox="0 0 22 22"><g fill="none" stroke="#555" stroke-width="1"><path d="M2 6.3 H4.8" stroke="#333" stroke-width="1.2"/><circle cx="12.2" cy="6.6" r="5.6"/><path d="M12.2 3.4 A3.3 3.3 0 1 0 15.4 7.6 H12.4" stroke="#555" stroke-width="1.1"/><path d="M14.6 12.4 L16.8 16.6" stroke="#444" stroke-width="1.1"/></g></svg>
<div class="inp" style="left:430px;top:189px;width:78px;height:27px;margin-top:0px;border-radius:2px;border-color:#d6d6d6"></div>
<svg class="abs" style="left:436px;top:194px" width="10" height="16" viewBox="0 0 10 16"><path d="M1 1 V12.2 L3.7 9.8 L5.6 14.4 L7.4 13.6 L5.5 9.2 L9 9 Z" fill="#fff" stroke="#4a4a4a" stroke-width="1" stroke-linejoin="round"/></svg>
<svg class="abs" style="left:518px;top:197px" width="10" height="10" viewBox="0 0 10 10"><path d="M1 1 L9 9 M9 1 L1 9" stroke="#3a3a3a" stroke-width="1.9" fill="none"/></svg>
<svg class="abs" style="left:429px;top:248px" width="23" height="27" viewBox="0 0 23 27"><rect width="23" height="27" rx="1" fill="#0696d7"/><path d="M18.98 10.75 A7.7 7.7 0 1 1 15.25 7.02" fill="none" stroke="#fff" stroke-width="1"/><path d="M12 9.6 A4.4 4.4 0 1 0 16.38 14.38" fill="none" stroke="#fff" stroke-width="2.3"/><path d="M15.4 14.5 H19.6" stroke="#fff" stroke-width="1.7"/></svg>
<svg class="abs" style="left:461px;top:253px" width="20" height="20" viewBox="0 0 20 20"><g fill="none" stroke="#555" stroke-width="1"><path d="M1.5 8 V1.5 H8"/><path d="M15.6 6.8 A6.2 6.2 0 1 0 7.8 15.4" stroke="#444" stroke-width="1.2"/><path d="M13.2 8.4 A3.6 3.6 0 1 0 8.5 12.6" stroke="#555" stroke-width="1.1"/><rect x="10.5" y="9.5" width="7" height="7" fill="#c8c8c8" stroke="#444"/></g></svg>
<svg class="abs" style="left:489px;top:253px" width="22" height="22" viewBox="0 0 22 22"><g fill="none" stroke="#555" stroke-width="1"><path d="M2 6.3 H4.8" stroke="#333" stroke-width="1.2"/><circle cx="12.2" cy="6.6" r="5.6"/><path d="M12.2 3.4 A3.3 3.3 0 1 0 15.4 7.6 H12.4" stroke="#555" stroke-width="1.1"/><path d="M14.6 12.4 L16.8 16.6" stroke="#444" stroke-width="1.1"/></g></svg>
<div class="inp" style="left:430px;top:189px;width:78px;height:27px;margin-top:90px;border-radius:2px;border-color:#d6d6d6"></div>
<svg class="abs" style="left:436px;top:284px" width="10" height="16" viewBox="0 0 10 16"><path d="M1 1 V12.2 L3.7 9.8 L5.6 14.4 L7.4 13.6 L5.5 9.2 L9 9 Z" fill="#fff" stroke="#4a4a4a" stroke-width="1" stroke-linejoin="round"/></svg>
<svg class="abs" style="left:518px;top:287px" width="10" height="10" viewBox="0 0 10 10"><path d="M1 1 L9 9 M9 1 L1 9" stroke="#3a3a3a" stroke-width="1.9" fill="none"/></svg>
<div class="inp" style="left:430px;top:339px;width:160px;height:26px"></div>
<div class="inp" style="left:430px;top:369px;width:160px;height:26px"></div>
<div class="inp" style="left:430px;top:399px;width:160px;height:26px"></div>
<div class="inp" style="left:430px;top:429px;width:160px;height:26px"></div>
<span class="t " style="left:371.0px;top:78.4px;font-size:11px;color:#555;transform:scaleX(0.861);">EDIT JOINT</span>
<span class="t " style="left:354.3px;top:105.4px;font-size:11px;transform:scaleX(0.925);">Position</span>
<span class="t " style="left:407.3px;top:105.4px;font-size:11px;transform:scaleX(0.914);">Motion</span>
<span class="t b" style="left:371.0px;top:135.7px;font-size:12px;transform:scaleX(0.954);">Component 1 - terminal:1</span>
<span class="t b" style="left:371.0px;top:225.7px;font-size:12px;transform:scaleX(0.932);">Component 2 - LED 5mm:1</span>
<span class="t b" style="left:371.0px;top:315.7px;font-size:12px;transform:scaleX(0.972);">Alignment</span>
<span class="t " style="left:359.5px;top:165.2px;font-size:11px;transform:scaleX(0.936);">Origin Mode</span>
<span class="t " style="left:359.5px;top:195.2px;font-size:11px;transform:scaleX(0.938);">Snap</span>
<span class="t " style="left:452.0px;top:195.4px;font-size:11px;transform:scaleX(0.963);">1 selected</span>
<span class="t " style="left:359.5px;top:255.2px;font-size:11px;transform:scaleX(0.936);">Origin Mode</span>
<span class="t " style="left:359.5px;top:285.2px;font-size:11px;transform:scaleX(0.938);">Snap</span>
<span class="t " style="left:452.0px;top:285.4px;font-size:11px;transform:scaleX(0.963);">1 selected</span>
<span class="t " style="left:359.5px;top:345.4px;font-size:11px;transform:scaleX(0.995);">Angle</span>
<span class="t " style="left:359.5px;top:375.4px;font-size:11px;transform:scaleX(1.047);">Offset X</span>
<span class="t " style="left:359.5px;top:405.4px;font-size:11px;transform:scaleX(1.052);">Offset Y</span>
<span class="t " style="left:359.5px;top:435.4px;font-size:11px;transform:scaleX(1.064);">Offset Z</span>
<span class="t " style="left:433.3px;top:345.4px;font-size:11px;transform:scaleX(0.981);">0.0 deg</span>
<span class="t " style="left:433.3px;top:375.4px;font-size:11px;transform:scaleX(0.944);">0.00 mm</span>
<span class="t " style="left:433.3px;top:405.4px;font-size:11px;transform:scaleX(0.938);">0 mm</span>
<span class="t " style="left:433.3px;top:435.4px;font-size:11px;transform:scaleX(0.937);">-3 mm</span>
<div class="abs" style="left:347px;top:447px;width:273px;height:37px;background:#f1f1f1"></div>
<div class="abs" style="left:347px;top:447px;width:273px;height:1px;background:#dcdcdc"></div>
<div class="btn" style="left:480px;top:457px;width:60px;height:18px"></div>
<div class="btn" style="left:550px;top:457px;width:60px;height:18px"></div>
<svg class="abs" style="left:355px;top:460px" width="12" height="12" viewBox="0 0 12 12"><circle cx="6" cy="6" r="5.2" fill="#111"/><rect x="5.1" y="5" width="1.9" height="4.2" fill="#fff"/><circle cx="6" cy="3.2" r="1.1" fill="#fff"/></svg>
<div class="abs" style="left:613px;top:126px;width:6px;height:321px;background:#c3c3c5"></div>
<div class="abs" style="left:613.3px;top:127.5px;width:5.4px;height:283px;background:#8e8e8e;border-radius:2.7px"></div>
<span class="t " style="left:266.1px;top:163.4px;font-size:11px;transform:scaleX(1.000);">0.0 deg</span>
<span class="t " style="left:501.4px;top:459.3px;font-size:12px;transform:scaleX(1.009);">OK</span>
<span class="t " style="left:560.2px;top:459.3px;font-size:12px;transform:scaleX(1.028);">Cancel</span>
</body></html>
